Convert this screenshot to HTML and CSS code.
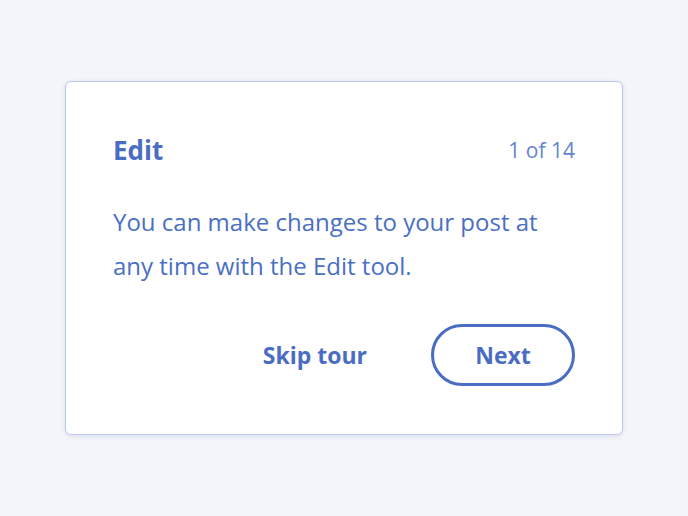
FILE: index.html
```html
<!DOCTYPE html>
<html lang="en">
<head>
<meta charset="utf-8">
<title>Tour</title>
<link rel="stylesheet" href="styles.css">
</head>
<body>
<main class="stage">
  <section class="card">
    <header class="card-header">
      <h2 class="title">Edit</h2>
      <span class="counter">1 of 14</span>
    </header>
    <p class="body">You can make changes to your post at any time with the Edit tool.</p>
    <footer class="actions">
      <button class="btn btn-quiet">Skip tour</button>
      <button class="btn btn-outline">Next</button>
    </footer>
  </section>
</main>
</body>
</html>
```
FILE: styles.css
```css
html, body {
  margin: 0;
  padding: 0;
  height: 100%;
}
body {
  background: #f4f5fa;
  font-family: "Open Sans", "Lato", sans-serif;
  color: #4a6fc4;
}
.stage {
  height: 100%;
  display: flex;
  align-items: center;
  justify-content: center;
}
.card {
  box-sizing: border-box;
  width: 558px;
  height: 354px;
  background: #ffffff;
  border: 1.5px solid #bdcaec;
  border-radius: 6px;
  box-shadow: 0 1px 4px rgba(110, 130, 190, 0.22);
  padding: 48px 47px 48px 47px;
  display: flex;
  flex-direction: column;
}
.card-header {
  display: flex;
  justify-content: space-between;
  align-items: center;
  height: 40px;
}
.title {
  margin: 0;
  font-size: 26px;
  font-weight: 700;
  line-height: 40px;
  color: #4a6cc2;
}
.counter {
  font-size: 21px;
  line-height: 40px;
  color: #6484cf;
}
.body {
  margin: 30px 0 0 0;
  font-size: 24px;
  line-height: 44px;
  color: #4a6fc4;
}
.actions {
  margin-top: auto;
  display: flex;
  justify-content: flex-end;
  align-items: center;
  gap: 64px;
}
.btn {
  font-family: inherit;
  font-size: 23px;
  font-weight: 700;
  color: #4a6cc2;
  background: transparent;
  height: 62px;
  cursor: pointer;
}
.btn-quiet {
  border: none;
  padding: 0;
}
.btn-outline {
  box-sizing: border-box;
  width: 144px;
  border: 3px solid #4a6cc2;
  border-radius: 31px;
  padding: 0;
}
```
